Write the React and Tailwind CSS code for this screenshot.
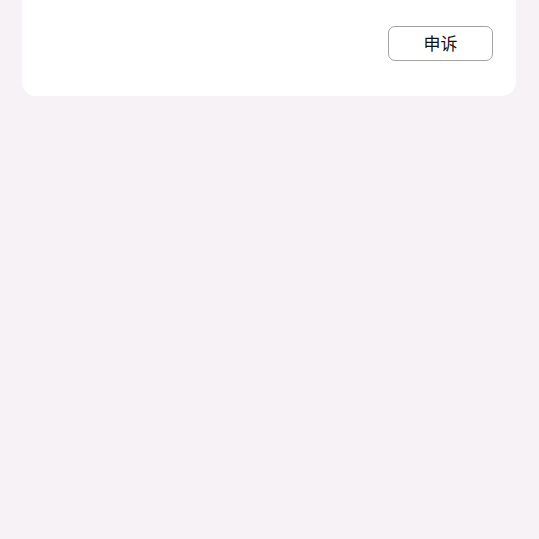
export default function App() {
  return (
    <div className="min-h-[539px] bg-[#f6f2f5] px-[22px]" style={{ fontFamily: '"Noto Sans CJK SC", "Noto Sans", sans-serif' }}>
      <div className="bg-white rounded-b-[14px] w-[494px] pt-[26px] pb-[35px] pr-[23px] flex justify-end">
        <button className="w-[105px] h-[35px] border border-[#a3a3a3] rounded-[7px] text-[17px] leading-none text-[#111] flex items-center justify-center bg-white pb-[3px]">
          申诉
        </button>
      </div>
    </div>
  );
}
